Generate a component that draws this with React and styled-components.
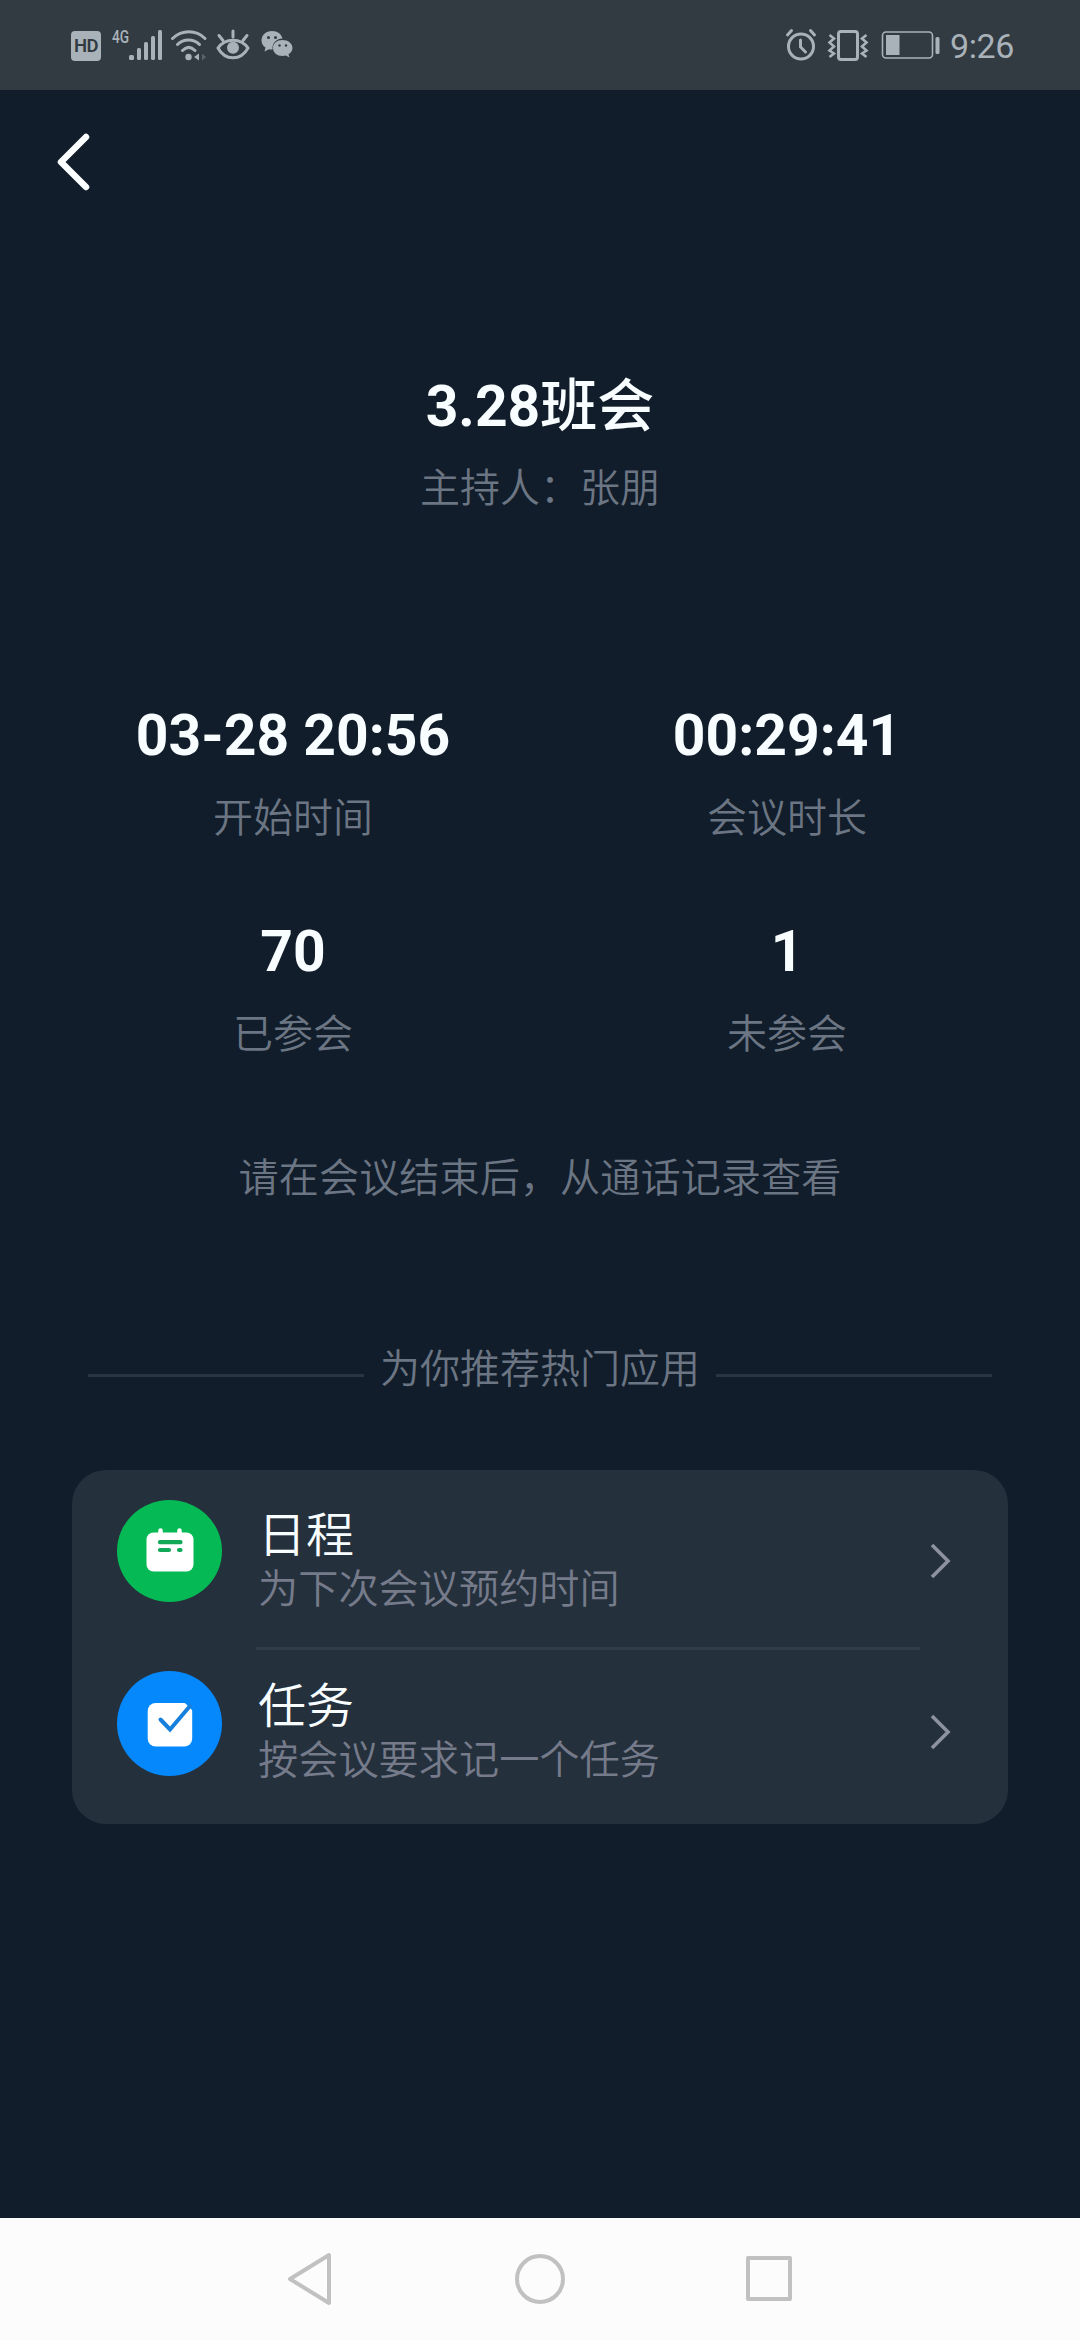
import React from "react";
import styled, { createGlobalStyle } from "styled-components";

const GlobalStyle = createGlobalStyle`
  body { margin: 0; background: #111d2a; }
  * { box-sizing: border-box; }
  svg { display: block; flex: none; }
`;

const Screen = styled.div`
  width: 1080px;
  height: 2340px;
  display: flex;
  flex-direction: column;
  overflow: hidden;
  background: #111d2a;
  color: #f8fdff;
  font-family: Roboto, "Noto Sans CJK SC", sans-serif;
`;

const StatusBar = styled.div`
  flex: none;
  height: 90px;
  padding: 0 66px 0 71px;
  display: flex;
  align-items: center;
  justify-content: space-between;
  background: #323a42;
  color: #a9b2b9;
`;

const StatusGroup = styled.div`
  display: flex;
  align-items: center;
`;

const StatusIcon = styled.span`
  margin-left: ${(p) => p.$gap}px;
`;

const HdBadge = styled.span`
  width: 30px;
  height: 30px;
  margin-top: 2px;
  border-radius: 4px;
  background: #a9b2b9;
  color: #323a42;
  font: 600 18.5px/31px Roboto, sans-serif;
  letter-spacing: -0.5px;
  text-align: center;
`;

const Network = styled.span`
  margin: -17px 0 0 11px;
  width: 17px;
  font: 500 19px/20px Roboto, sans-serif;
  transform: scaleX(0.72);
  transform-origin: left center;
`;

const Clock = styled.span`
  margin-left: 10px;
  font-size: 34px;
  line-height: 40px;
  letter-spacing: -0.4px;
  margin-top: 2px;
`;

const Content = styled.main`
  flex: 1;
  display: flex;
  flex-direction: column;
`;

const Toolbar = styled.header`
  height: 144px;
  padding: 40px 0 0 53px;
`;

const Heading = styled.section`
  margin-top: 141px;
  display: flex;
  flex-direction: column;
  align-items: center;
`;

const Title = styled.h1`
  margin: 0;
  font-size: 57px;
  line-height: 64px;
  font-weight: 700;
`;

const CjkTitle = styled.span`
  font-weight: 500;
`;

const Muted = styled.p`
  margin: 0;
  color: #6b7583;
  font-size: 40px;
  font-weight: 350;
  line-height: 48px;
`;

const Host = styled(Muted)`
  margin-top: 26px;
`;

const Stats = styled.section`
  margin-top: 191px;
  padding: 0 46px;
  display: grid;
  grid-template-columns: 1fr 1fr;
  grid-auto-rows: 216px;
`;

const Stat = styled.div`
  display: flex;
  flex-direction: column;
  align-items: center;
  gap: 27px;
`;

const Value = styled.strong`
  font-size: 57px;
  line-height: 64px;
  font-weight: 700;
`;

const Hint = styled(Muted)`
  margin-top: 19px;
  text-align: center;
  font-size: 40.2px;
`;

const SectionLabel = styled.div`
  margin-top: 143px;
  padding: 0 88px;
  display: flex;
  align-items: center;
  justify-content: space-between;
`;

const Rule = styled.span`
  width: 276px;
  height: 3px;
  margin-top: 11px;
  background: #2a3541;
`;

const Card = styled.section`
  margin: 76px 72px 0;
  height: 354px;
  padding: 30px 50px 0 45px;
  border-radius: 34px;
  background: #25303d;
`;

const AppRow = styled.div`
  height: 171px;
  display: flex;
`;

const Disc = styled.div`
  flex: none;
  width: 105px;
  height: ${(p) => p.$height}px;
  border-radius: 50%;
  background: ${(p) => p.$color};
  display: grid;
  place-items: center;
`;

const RowBody = styled.div`
  flex: none;
  width: 664px;
  margin-left: 34px;
  padding: 7px 0 0 2px;
  height: 150px;
  border-bottom: ${(p) => (p.$divided ? "3px solid #303c49" : "none")};
`;

const RowTitle = styled.div`
  font-size: 48px;
  font-weight: 350;
  line-height: 58px;
`;

const RowNote = styled(Muted)`
  margin-top: 1px;
  font-size: 40.2px;
  color: #757b8a;
`;

const RowArrow = styled.div`
  margin: 40px 0 0 9px;
`;

const NavBar = styled.nav`
  flex: none;
  height: 122px;
  padding: 0 286px;
  display: flex;
  align-items: center;
  justify-content: space-between;
  background: #fcfcfc;
`;

const SignalIcon = () => (
  <svg width="34" height="32" viewBox="0 0 34 32" fill="currentColor">
    <rect x="0" y="26" width="5" height="5" rx="1.5" />
    <rect x="8" y="19" width="4" height="12" rx="1.5" />
    <rect x="15" y="13" width="4" height="18" rx="1.5" />
    <rect x="22" y="7" width="4" height="24" rx="1.5" />
    <rect x="29" y="1" width="4" height="30" rx="1.5" />
  </svg>
);

const WifiIcon = () => (
  <svg width="37" height="32" viewBox="0 0 37 32" fill="none" stroke="currentColor" strokeWidth="3" strokeLinecap="round">
    <path d="M2.500 9.500C12 .5 26 .5 35 9.500M7.500 15.500c6-6 16-6 22 0M12.500 21.500c4-4 8.500-4 12.500 0" />
    <circle cx="18.500" cy="28" r="3.200" fill="currentColor" stroke="none" />
    <path d="M29 24.500v7l-5-3.500z" fill="currentColor" stroke="none" />
    <path d="M32 24.500v7l4-3.500z" fill="#59626b" stroke="none" />
  </svg>
);

const EyeIcon = () => (
  <svg width="34" height="32" viewBox="0 0 34 32" fill="none" stroke="currentColor" strokeWidth="3" strokeLinecap="round">
    <path d="M2 19C9 8.500 25 8.500 32 19C25 32 9 32 2 19Z" />
    <path d="M17 2v6M3 6.500l4 5M31 6.500l-4 5" />
    <circle cx="17" cy="18.800" r="6" fill="currentColor" stroke="none" />
  </svg>
);

const WechatIcon = () => (
  <svg width="32" height="30" viewBox="0 0 32 30" fill="currentColor">
    <path d="M11 1C5 1 .5 5 .5 10.500c0 3 1.500 5.500 4 7L3.500 21.500l4.500-2.300c1 .3 2 .4 3.500.4C11 12.500 16 8.500 21.500 8.500 20.500 4 16.500 1 11 1z" />
    <path d="M21.500 10C16 10 12 13.500 12 18s4 8 9.500 8c1.200 0 2.300-.2 3.300-.5l3.700 2-1-3.200c2.500-1.500 4-3.800 4-6.300 0-4.500-4.500-8-10-8z" />
    <g fill="#323a42">
      <circle cx="7.500" cy="7.500" r="1.500" /><circle cx="14.500" cy="7.500" r="1.500" />
      <circle cx="18.500" cy="15.500" r="1.200" /><circle cx="25" cy="15.500" r="1.200" />
    </g>
  </svg>
);

const AlarmIcon = () => (
  <svg width="32" height="34" viewBox="0 0 32 34" fill="none" stroke="currentColor" strokeWidth="3" strokeLinecap="round">
    <circle cx="16" cy="18.500" r="12.500" />
    <path d="M2.500 7l4-4.500M29.500 7l-4-4.500M15.500 12v7l5 5" />
  </svg>
);

const VibrateIcon = () => (
  <svg width="42" height="34" viewBox="0 0 42 34" fill="none" stroke="currentColor" strokeWidth="3">
    <rect x="11.500" y="3.500" width="19" height="28" rx="2.500" />
    <path d="M2.500 7l4.500 3.500-4.500 4 4.500 4-4.500 4 4.500 3-4.500 3.500M39.500 7l-4.500 3.500 4.500 4-4.500 4 4.500 4-4.500 3 4.500 3.500" strokeWidth="2.600" />
  </svg>
);

const BatteryIcon = () => (
  <svg width="59" height="30" viewBox="0 0 59 30" fill="currentColor">
    <rect x="1.500" y="2" width="50" height="26" rx="3.500" fill="none" stroke="currentColor" strokeWidth="1.600" />
    <rect x="5" y="5" width="13.500" height="20" />
    <rect x="54.500" y="7" width="4" height="17" rx="1.500" />
  </svg>
);

const BackIcon = () => (
  <svg width="40" height="64" viewBox="0 0 40 64" fill="none" stroke="#fcffff" strokeWidth="6.500" strokeLinecap="round" strokeLinejoin="round">
    <path d="M33 7L8 32l25 25" />
  </svg>
);

const CalendarIcon = () => (
  <svg width="48" height="46" viewBox="0 0 48 46">
    <rect x="0.500" y="4.500" width="47" height="39" rx="7" fill="#fff" />
    <path d="M14.500 2.500v5M33.500 2.500v5" stroke="#fff" strokeWidth="4.500" strokeLinecap="round" />
    <path d="M14 14.200h20.500M14 22h9M33 22h1.500" stroke="#11a958" strokeWidth="4.200" strokeLinecap="round" />
  </svg>
);

const TaskIcon = () => (
  <svg width="46" height="46" viewBox="0 0 46 46">
    <rect x="0.700" y="2" width="44.500" height="43.500" rx="8" fill="#fff" />
    <path d="M37 1h9v9z" fill="#0588fc" />
    <path d="M13.500 18.500l9.500 10L43 5" fill="none" stroke="#1780dc" strokeWidth="4" strokeLinecap="round" />
  </svg>
);

const ArrowIcon = () => (
  <svg width="26" height="42" viewBox="0 0 26 42" fill="none" stroke="#8c929e" strokeWidth="3.600">
    <path d="M3 5l16 16L3 37" />
  </svg>
);

const NavIcon = ({ d }) => (
  <svg width="50" height="54" viewBox="0 0 50 54" fill="none" stroke="#c1c1c1" strokeWidth="4" strokeLinejoin="round">
    <path d={d} />
  </svg>
);

const STATS = [
  ["03-28 20:56", "开始时间"],
  ["00:29:41", "会议时长"],
  ["70", "已参会"],
  ["1", "未参会"],
];

const APPS = [
  { title: "日程", note: "为下次会议预约时间", color: "#05b955", height: 102, icon: <CalendarIcon /> },
  { title: "任务", note: "按会议要求记一个任务", color: "#0588fc", height: 105, icon: <TaskIcon /> },
];

export default function App() {
  return (
    <Screen lang="zh-CN">
      <GlobalStyle />
      <StatusBar>
        <StatusGroup>
          <HdBadge>HD</HdBadge>
          <Network>4G</Network>
          <SignalIcon />
          <StatusIcon $gap={7}><WifiIcon /></StatusIcon>
          <StatusIcon $gap={9}><EyeIcon /></StatusIcon>
          <StatusIcon $gap={11}><WechatIcon /></StatusIcon>
        </StatusGroup>
        <StatusGroup>
          <AlarmIcon />
          <StatusIcon $gap={10}><VibrateIcon /></StatusIcon>
          <StatusIcon $gap={12}><BatteryIcon /></StatusIcon>
          <Clock>9:26</Clock>
        </StatusGroup>
      </StatusBar>
      <Content>
        <Toolbar><BackIcon /></Toolbar>
        <Heading>
          <Title>3.28<CjkTitle>班会</CjkTitle></Title>
          <Host>主持人：张朋</Host>
        </Heading>
        <Stats>
          {STATS.map(([value, label]) => (
            <Stat key={label}>
              <Value>{value}</Value>
              <Muted>{label}</Muted>
            </Stat>
          ))}
        </Stats>
        <Hint>请在会议结束后，从通话记录查看</Hint>
        <SectionLabel>
          <Rule />
          <Muted>为你推荐热门应用</Muted>
          <Rule />
        </SectionLabel>
        <Card>
          {APPS.map((app, i) => (
            <AppRow key={app.title}>
              <Disc $color={app.color} $height={app.height}>{app.icon}</Disc>
              <RowBody $divided={i === 0}>
                <RowTitle>{app.title}</RowTitle>
                <RowNote>{app.note}</RowNote>
              </RowBody>
              <RowArrow><ArrowIcon /></RowArrow>
            </AppRow>
          ))}
        </Card>
      </Content>
      <NavBar>
        <NavIcon d="M43 3v48L4 27z" />
        <NavIcon d="M25 4a23 23 0 1 0 0 46a23 23 0 1 0 0-46z" />
        <NavIcon d="M4 6h42v41H4z" />
      </NavBar>
    </Screen>
  );
}
